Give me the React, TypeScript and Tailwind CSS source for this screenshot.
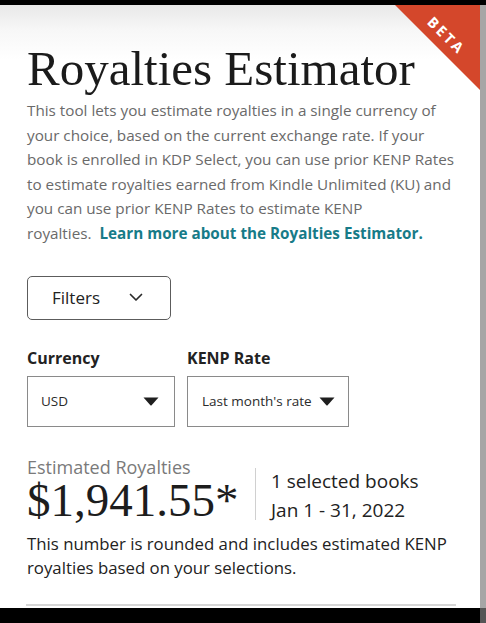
import React from "react";

const sans = "font-['Open_Sans','Noto_Sans',sans-serif]";
const serif = "font-['Liberation_Serif','Times_New_Roman',serif]";

function Caret() {
  return (
    <svg width="16" height="9" viewBox="0 0 16 9" className="shrink-0">
      <path d="M0.5 0.5 H15.5 L8.6 8.3 Q8 8.9 7.4 8.3 Z" fill="#1f1f1f" />
    </svg>
  );
}

function Chevron() {
  return (
    <svg width="14" height="9" viewBox="0 0 14 9" className="shrink-0">
      <polyline points="1.5,1.5 7,7 12.5,1.5" fill="none" stroke="#2a2a2a" strokeWidth="1.7" strokeLinecap="round" strokeLinejoin="round" />
    </svg>
  );
}

export default function App() {
  return (
    <div className={`w-[486px] h-[623px] bg-black flex flex-col overflow-hidden ${sans}`}>
      <div className="h-[5px] shrink-0" />
      <div className="flex flex-1 min-h-0">
        <main className="relative flex-1 flex flex-col pl-[27px] pt-[39px] bg-[linear-gradient(to_bottom,#e8e8e8_0px,#f7f7f7_25px,#ffffff_55px)]">
          {/* BETA ribbon */}
          <div className="absolute top-0 right-0 w-[85px] h-[85px]">
            <div className="absolute inset-0 bg-[#d4472b] [clip-path:polygon(0_0,100%_0,100%_100%)]" />
            <span className="absolute left-[51px] top-[31px] -translate-x-1/2 -translate-y-1/2 rotate-45 text-white font-bold text-[14.5px] leading-none tracking-[2.5px]">
              BETA
            </span>
          </div>

          <h1 className={`${serif} text-[49px] leading-[49px] text-[#1b1b1b]`}>Royalties Estimator</h1>

          <p className="mt-[5px] text-[15.25px] leading-[24.6px] text-[#6a6a6a] whitespace-nowrap">
            This tool lets you estimate royalties in a single currency of
            <br />
            your choice, based on the current exchange rate. If your
            <br />
            book is enrolled in KDP Select, you can use prior KENP Rates
            <br />
            to estimate royalties earned from Kindle Unlimited (KU) and
            <br />
            you can use prior KENP Rates to estimate KENP
            <br />
            royalties.{"\u00a0 "}
            <a className="font-bold text-[#177b88]">Learn more about the Royalties Estimator.</a>
          </p>

          <button className="mt-[30px] w-[144px] h-[44px] border border-[#5c5c5c] rounded-[5px] flex items-center pl-[24px] gap-[29px] text-[17px] text-[#222]">
            <span>Filters</span>
            <Chevron />
          </button>

          <div className="mt-[28px] flex gap-[12px]">
            <div className="w-[148px] flex flex-col">
              <span className="font-bold text-[16px] leading-[20px] text-[#222]">Currency</span>
              <div className="mt-[8px] h-[51px] border border-[#8a8a8a] flex items-center justify-between pl-[13px] pr-[15px] text-[13.5px] text-[#2b2b2b]">
                <span>USD</span>
                <Caret />
              </div>
            </div>
            <div className="w-[162px] flex flex-col">
              <span className="font-bold text-[16px] leading-[20px] text-[#222]">KENP Rate</span>
              <div className="mt-[8px] h-[51px] border border-[#8a8a8a] flex items-center justify-between pl-[14px] pr-[13px] text-[13.5px] text-[#2b2b2b]">
                <span>Last month's rate</span>
                <Caret />
              </div>
            </div>
          </div>

          <div className="mt-[31px] flex items-end">
            <div className="w-[228px] flex flex-col">
              <span className="text-[18px] leading-[18px] text-[#7a7a7a]">Estimated Royalties</span>
              <span className={`${serif} text-[47px] leading-[49px] text-[#1d1d1d]`}>$1,941.55*</span>
            </div>
            <div className="w-px h-[52px] mb-[5px] bg-[#d0d0d0]" />
            <div className="ml-[15px] flex flex-col text-[19px] leading-[29px] text-[#222]">
              <span>1 selected books</span>
              <span>Jan 1 - 31, 2022</span>
            </div>
          </div>

          <p className="mt-[7px] text-[16.8px] leading-[24px] text-[#222] whitespace-nowrap">
            This number is rounded and includes estimated KENP
            <br />
            royalties based on your selections.
          </p>

          <div className="mt-auto mb-[2px] ml-[-1px] w-[430px] h-[2px] bg-[#d6d6d6]" />
        </main>
        <div className="w-[6px] shrink-0 bg-[#a6a6a6]" />
      </div>
      <div className="h-[15px] shrink-0 flex justify-end">
        <div className="w-[6px] bg-[#555]" />
      </div>
    </div>
  );
}
